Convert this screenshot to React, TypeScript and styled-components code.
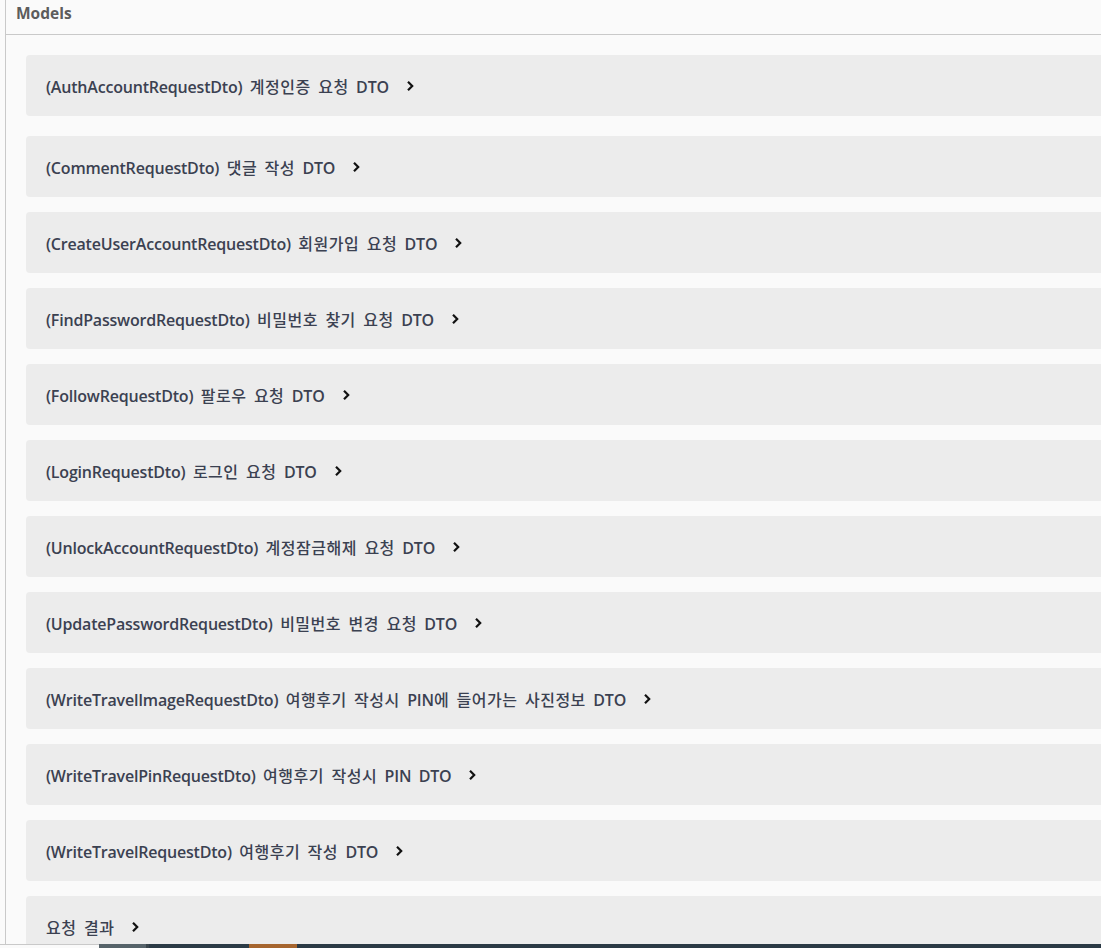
import React from "react";
import styled, { createGlobalStyle } from "styled-components";

const Global = createGlobalStyle`
  html, body { margin: 0; padding: 0; background: #fafafa; overflow: hidden; }
  body { font-family: "Open Sans", "Noto Sans CJK KR", sans-serif; }
`;

const Page = styled.div`
  width: 1101px;
  height: 948px;
  overflow: hidden;
  padding-left: 5px;
  box-sizing: border-box;
`;

const Section = styled.section`
  width: 1200px;
  border-left: 1px solid #c9c9c9;
  background: #fafafa;
  min-height: 948px;
`;

const Header = styled.h4`
  margin: 0;
  height: 35px;
  box-sizing: border-box;
  padding: 2px 10px 0 10px;
  border-bottom: 1px solid #c9c9c9;
  font-family: "Open Sans", "Noto Sans CJK KR", sans-serif;
  font-weight: 700;
  font-size: 15.5px;
  line-height: 22px;
  color: #5c5c5c;
`;

const List = styled.div`
  display: flex;
  flex-direction: column;
  gap: 15px;
  padding: 20px 0 0 20px;
`;

const Card = styled.div<{ $first?: boolean }>`
  height: 61px;
  box-sizing: border-box;
  background: #ececec;
  border-radius: 4px;
  display: flex;
  align-items: center;
  padding: 1px 20px 0;
  margin-bottom: ${(p) => (p.$first ? "5px" : "0")};
  font-family: "Open Sans", "Noto Sans CJK KR", sans-serif;
  font-weight: 600;
  font-size: 16px;
  color: #3b4151;
  letter-spacing: -0.2px;
  word-spacing: 3.5px;
`;

const Title = styled.span`
  white-space: nowrap;
`;

const Ko = styled.span`
  font-family: "Noto Sans CJK KR", sans-serif;
  font-weight: 500;
  letter-spacing: 0.5px;
`;

const Toggle = styled.svg`
  margin-left: 16px;
  width: 10px;
  height: 12px;
  flex: none;
`;

const BottomStrip = styled.div`
  position: fixed;
  left: 0;
  right: 0;
  bottom: 0;
  height: 4px;
  display: flex;
`;

const Seg = styled.div<{ $w?: number; $c: string; $line?: boolean }>`
  ${(p) => (p.$w ? `width: ${p.$w}px; flex: none;` : "flex: 1;")}
  background: ${(p) => p.$c};
  ${(p) => (p.$line ? "border-top: 1px solid #c9c9c9; box-sizing: border-box;" : "")}
`;

const models = [
  "(AuthAccountRequestDto) 계정인증 요청 DTO",
  "(CommentRequestDto) 댓글 작성 DTO",
  "(CreateUserAccountRequestDto) 회원가입 요청 DTO",
  "(FindPasswordRequestDto) 비밀번호 찾기 요청 DTO",
  "(FollowRequestDto) 팔로우 요청 DTO",
  "(LoginRequestDto) 로그인 요청 DTO",
  "(UnlockAccountRequestDto) 계정잠금해제 요청 DTO",
  "(UpdatePasswordRequestDto) 비밀번호 변경 요청 DTO",
  "(WriteTravelImageRequestDto) 여행후기 작성시 PIN에 들어가는 사진정보 DTO",
  "(WriteTravelPinRequestDto) 여행후기 작성시 PIN DTO",
  "(WriteTravelRequestDto) 여행후기 작성 DTO",
  "요청 결과",
];

const renderText = (s: string) =>
  s.split(/([\uAC00-\uD7A3]+)/).map((part, i) =>
    /[\uAC00-\uD7A3]/.test(part) ? <Ko key={i}>{part}</Ko> : <React.Fragment key={i}>{part}</React.Fragment>
  );

const Chevron = () => (
  <Toggle viewBox="0 0 10 12">
    <path d="M3 1.8 L7.2 6 L3 10.2" fill="none" stroke="#111" strokeWidth="2.2" />
  </Toggle>
);

export default function App() {
  return (
    <>
      <Global />
      <Page>
        <Section>
          <Header>Models</Header>
          <List>
            {models.map((m, i) => (
              <Card key={m} $first={i === 0}>
                <Title>{renderText(m)}</Title>
                <Chevron />
              </Card>
            ))}
          </List>
        </Section>
      </Page>
      <BottomStrip>
        <Seg $w={99} $c="#fafafa" $line />
        <Seg $w={47} $c="#56636a" />
        <Seg $w={3} $c="#3a454c" />
        <Seg $w={100} $c="#2c3b46" />
        <Seg $w={48} $c="#a6652e" />
        <Seg $c="#2b3a45" />
      </BottomStrip>
    </>
  );
}
